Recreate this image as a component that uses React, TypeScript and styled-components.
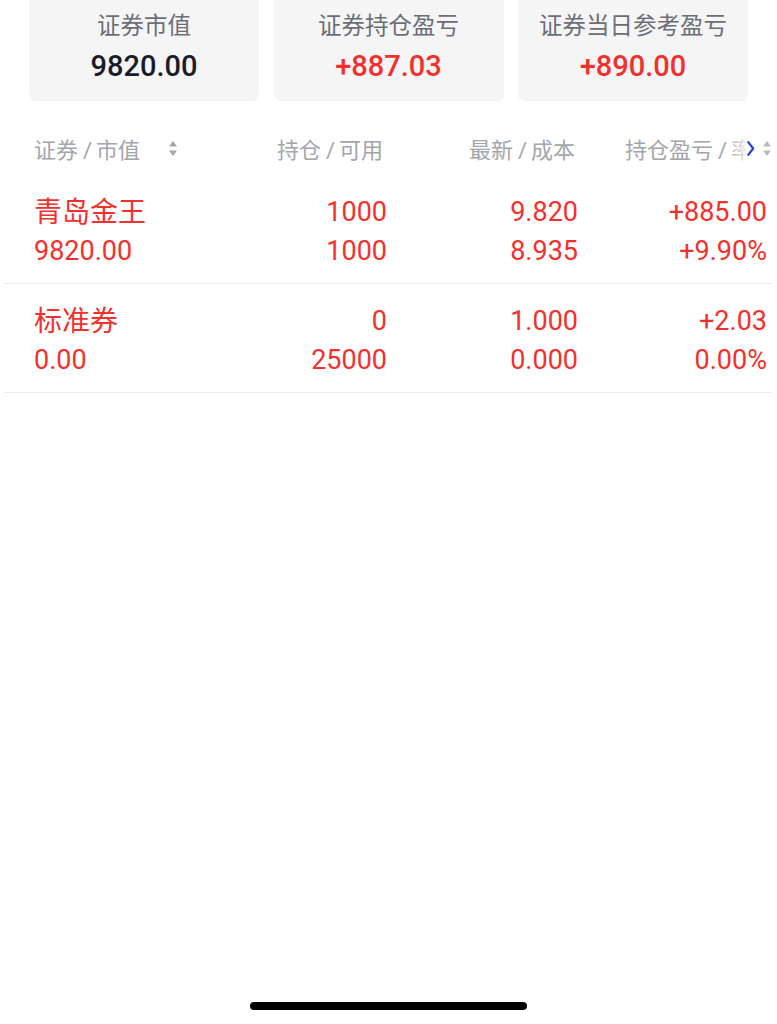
import styled, { createGlobalStyle } from 'styled-components'

const RED = '#f2302d'
const CJK = `Roboto, "Noto Sans CJK SC", sans-serif`

const GlobalStyle = createGlobalStyle`
    html, body {
        margin: 0;
        padding: 0;
        background: #ffffff;
        font-family: ${CJK};
    }
    body {
        overflow: hidden;
    }
`

const Page = styled.div`
    position: relative;
    width: 777px;
    height: 1024px;
    overflow: hidden;
    background: #fff;
`

const Summary = styled.div`
    display: grid;
    grid-template-columns: repeat(3, 230px);
    column-gap: 14.5px;
    padding: 0 30px 0 29px;
    margin-top: -12px;
`

const Card = styled.div`
    height: 113px;
    border-radius: 7px;
    background: #f5f5f6;
    display: flex;
    flex-direction: column;
    align-items: center;
    padding-top: 22px;
    box-sizing: border-box;
`

const CardLabel = styled.div`
    font-size: 23.5px;
    line-height: 32px;
    color: #6c6e76;
`

const CardValue = styled.div<{ $red?: boolean }>`
    font-size: 29px;
    font-weight: 500;
    line-height: 40px;
    margin-top: 4px;
    color: ${p => p.$red ? RED : '#1a1c2a'};
`

const Table = styled.div`
    position: relative;
    margin: 20px 5px 0 4px;
    overflow: hidden;
`

const Grid = styled.div`
    display: grid;
    grid-template-columns: 166px 187px 191px 189px;
    padding: 0 5px 0 30px;
`

const HeadRow = styled(Grid)`
    height: 54px;
    align-items: center;
`

const HeadCell = styled.div<{ $align?: 'left' | 'right' }>`
    display: flex;
    align-items: center;
    justify-content: ${p => p.$align === 'right' ? 'flex-end' : 'flex-start'};
    font-size: 22px;
    color: #a3a5ab;
    white-space: nowrap;
`

const LastHead = styled(HeadCell)`
    padding-left: 47px;
    overflow: visible;
`

const Slash = styled.span`
    display: inline-block;
    padding: 0 4px 0 5px;
`

const SortIcon = styled.svg<{ $gap: number }>`
    flex: none;
    margin-left: ${p => p.$gap}px;
    width: 10px;
    height: 17px;
`

const Fade = styled.div`
    position: absolute;
    top: 0;
    right: 0;
    width: 44px;
    height: 54px;
    display: flex;
    align-items: center;
    padding-left: 18px;
    box-sizing: border-box;
    background: linear-gradient(to right, rgba(255,255,255,0), rgba(255,255,255,0.7) 35%, #fff 45%);
`

const Row = styled(Grid)`
    padding-top: 18px;
    padding-bottom: 12px;
    border-bottom: 1.5px solid #ebebed;
    color: ${RED};
    font-size: 27px;
    line-height: 39px;
`

const Cell = styled.div<{ $align?: 'left' | 'right' }>`
    display: flex;
    flex-direction: column;
    align-items: ${p => p.$align === 'right' ? 'flex-end' : 'flex-start'};
    white-space: nowrap;
`

const Name = styled.span`
    font-size: 28px;
`

const HomeBar = styled.div`
    position: absolute;
    left: 250px;
    bottom: 14px;
    width: 277px;
    height: 8px;
    border-radius: 4px;
    background: #000;
`

const Sort = ({ gap, color = '#a3a5ab' }: { gap: number, color?: string }) => (
    <SortIcon $gap={gap} viewBox="0 0 10 17">
        <path d="M5 1 L9 6.5 L1 6.5 Z" fill={color} />
        <path d="M5 16 L9 10.5 L1 10.5 Z" fill={color} />
    </SortIcon>
)

const Label = ({ a, b }: { a: string, b: string }) => <span>{a}<Slash>/</Slash>{b}</span>

interface Holding {
    name: string
    value: string
    position: string
    available: string
    latest: string
    cost: string
    profit: string
    rate: string
}

const holdings: Holding[] = [
    { name: '青岛金王', value: '9820.00', position: '1000', available: '1000', latest: '9.820', cost: '8.935', profit: '+885.00', rate: '+9.90%' },
    { name: '标准券', value: '0.00', position: '0', available: '25000', latest: '1.000', cost: '0.000', profit: '+2.03', rate: '0.00%' },
]

const App = () => {
    return <Page>
        <GlobalStyle/>
        <Summary>
            <Card>
                <CardLabel>证券市值</CardLabel>
                <CardValue>9820.00</CardValue>
            </Card>
            <Card>
                <CardLabel>证券持仓盈亏</CardLabel>
                <CardValue $red>+887.03</CardValue>
            </Card>
            <Card>
                <CardLabel>证券当日参考盈亏</CardLabel>
                <CardValue $red>+890.00</CardValue>
            </Card>
        </Summary>

        <Table>
            <HeadRow>
                <HeadCell>
                    <Label a="证券" b="市值"/>
                    <Sort gap={28}/>
                </HeadCell>
                <HeadCell $align="right"><Label a="持仓" b="可用"/><span style={{ width: 4 }}/></HeadCell>
                <HeadCell $align="right"><Label a="最新" b="成本"/><span style={{ width: 3 }}/></HeadCell>
                <LastHead><Label a="持仓盈亏" b="率"/></LastHead>
            </HeadRow>
            <Fade>
                <svg width="10" height="17" viewBox="0 0 10 17">
                    <path d="M2.5 1.5 L8 8.5 L2.5 15.5" fill="none" stroke="#2340c8" strokeWidth="2.4" strokeLinecap="round" strokeLinejoin="round"/>
                </svg>
                <Sort gap={7} color="#b9bbc0"/>
            </Fade>
            {holdings.map(h => (
                <Row key={h.name}>
                    <Cell>
                        <Name>{h.name}</Name>
                        <span>{h.value}</span>
                    </Cell>
                    <Cell $align="right">
                        <span>{h.position}</span>
                        <span>{h.available}</span>
                    </Cell>
                    <Cell $align="right">
                        <span>{h.latest}</span>
                        <span>{h.cost}</span>
                    </Cell>
                    <Cell $align="right">
                        <span>{h.profit}</span>
                        <span>{h.rate}</span>
                    </Cell>
                </Row>
            ))}
        </Table>

        <HomeBar/>
    </Page>
}

export default App
